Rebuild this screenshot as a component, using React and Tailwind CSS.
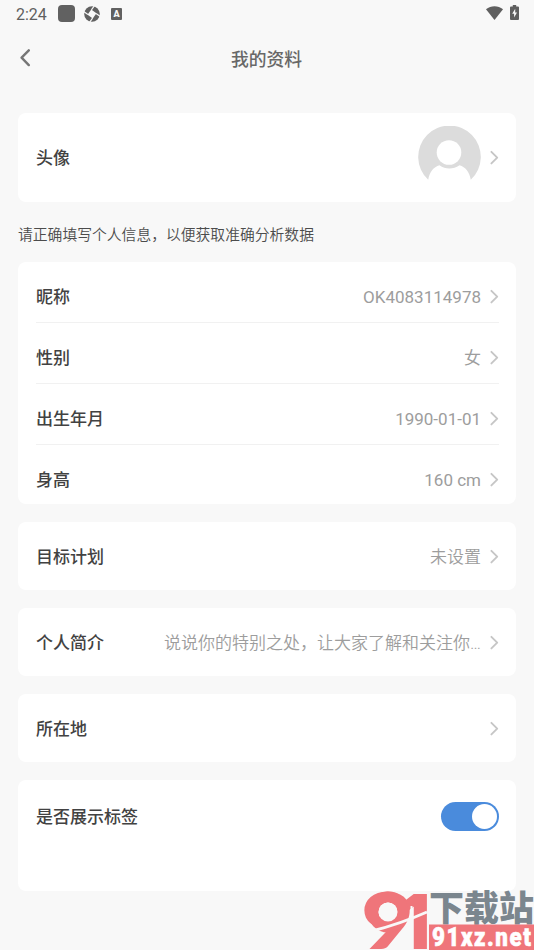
import React, { useState } from 'react';

const Chevron = () => (
    <svg className="ml-[9px] h-[15px] w-[9px] shrink-0" viewBox="0 0 9 15" fill="none" stroke="#c6c6c6" strokeWidth="1.9" strokeLinecap="round" strokeLinejoin="round">
        <path d="M1.4 1.8 7.2 7.6 1.4 13.4" />
    </svg>
);

const Row = ({ label, value }) => (
    <div className="flex flex-1 items-center">
        <span className="shrink-0 pt-[2px] font-medium text-[#424242]">{label}</span>
        <span className="flex-1 truncate pt-[2px] text-right text-[#9d9d9d]">{value}</span>
        <Chevron />
    </div>
);

const Card = ({ className, children }) => (
    <section className={`flex rounded-lg bg-white pl-[18px] pr-[17px] text-[17px] leading-6 ${className}`}>{children}</section>
);

const StatusBar = () => (
    <div className="flex h-7 items-center pl-4 pr-[15px] text-[#5f5f5f]">
        <span className="w-[42px] pt-px text-[16px] leading-5">2:24</span>
        <span className="mb-px h-[17px] w-[17px] rounded-[4px] bg-[#616161]" />
        <svg className="mb-px ml-[9px] h-4 w-4" viewBox="0 0 16 16">
            <circle cx="8" cy="8" r="7.8" fill="#616161" />
            <g transform="rotate(35 8 8)">
                <rect x="4.8" y="4.8" width="6.4" height="6.4" fill="#f8f8f8" />
                <path d="M5.2 5V-1M11 5.2H17M10.8 11V17M5 10.8H-1" stroke="#f8f8f8" strokeWidth="1.2" />
            </g>
        </svg>
        <span className="ml-[11px] flex h-3 w-[11px] items-center justify-center rounded-[1px] bg-[#616161] text-[9px] font-black leading-none text-[#f8f8f8]">A</span>
        <svg className="mb-[2px] ml-auto h-[14px] w-[17px]" viewBox="0 0 17 14" fill="#5f5f5f">
            <path d="M0 3.2C5-.9 12-.9 17 3.2L8.5 14Z" />
        </svg>
        <svg className="mb-[3px] ml-[7px] h-[15px] w-[9px]" viewBox="0 0 9 15">
            <path d="M2.8 0h3.4v1.5H8a1 1 0 0 1 1 1V14a1 1 0 0 1-1 1H1a1 1 0 0 1-1-1V2.5a1 1 0 0 1 1-1h1.8Z" fill="#5f5f5f" />
            <path d="M5.2 3.8 2.2 8.7h1.9V12.5l2.9-5H5.2Z" fill="#f8f8f8" />
        </svg>
    </div>
);

const Avatar = () => (
    <svg className="mb-px h-[63px] w-[63px]" viewBox="0 0 63 63">
        <path d="M10.2 53.8A31.3 31.3 0 1 1 52.8 53.8C51.5 46 47.5 41 41.5 39.2 35 43.5 27.5 43.5 21.5 39.2 15.5 41 11.5 46 10.2 53.8Z" fill="#dcdcdc" />
        <circle cx="31" cy="26.5" r="12.3" fill="#fff" />
    </svg>
);

// site mark in the bottom right corner
const Watermark = () => (
    <div className="absolute bottom-0 right-0 h-[60px] w-[170px]">
        <svg className="h-full w-full" viewBox="0 0 170 60">
            <g fill="#ef757a" fontWeight="900">
                <text x="-3" y="59" fontSize="78" fontFamily="Lato, sans-serif" textLength="53" lengthAdjust="spacingAndGlyphs">9</text>
                <text x="36" y="59" fontSize="75" fontFamily="Inter, sans-serif" textLength="30" lengthAdjust="spacingAndGlyphs">1</text>
            </g>
            <circle cx="24" cy="22" r="15" fill="none" stroke="#ef757a" strokeWidth="11" />
            <circle cx="24" cy="22" r="9.5" fill="#f8f8f8" />
            <path d="M8 41Q36 34 63 22" stroke="#f8f8f8" strokeWidth="3" fill="none" />
            <path d="M47.5 16V58" stroke="#f8f8f8" strokeWidth="2" />
            <text x="65" y="31" fontSize="35" fontWeight="900" fill="#7b868e" fontFamily="'Noto Sans CJK SC', sans-serif">下载站</text>
            <rect x="65" y="34.5" width="105" height="25.5" fill="#ef757a" />
            <g transform="translate(68 56) scale(.86 1)">
                <text fontSize="26" fontWeight="900" fill="#fff" stroke="#fff" strokeWidth="0.6" fontFamily="Roboto, sans-serif" textLength="115">91xz.net</text>
            </g>
        </svg>
    </div>
);

const profile = [
    { label: '昵称', value: 'OK4083114978' },
    { label: '性别', value: '女' },
    { label: '出生年月', value: '1990-01-01' },
    { label: '身高', value: '160 cm' },
];

const App = () => {
    const [showTags, setShowTags] = useState(true);

    return (
        <div className="relative h-[950px] w-[534px] overflow-hidden bg-[#f8f8f8] font-[Roboto,'Noto_Sans_CJK_SC',sans-serif]">
            <StatusBar />

            <header className="flex h-[60px] items-center px-5">
                <svg className="h-[18px] w-[11px]" viewBox="0 0 11 18" fill="none" stroke="#767676" strokeWidth="2.4" strokeLinecap="round" strokeLinejoin="round">
                    <path d="M8.8 1.3 1.6 8.7 8.8 16.1" />
                </svg>
                <h1 className="flex-1 pr-[12px] pt-[3px] text-center text-[17.8px] font-medium leading-6 text-[#686868]">我的资料</h1>
            </header>

            <main className="px-[18px] pt-[25px]">
                <Card className="h-[89px] items-center">
                    <span className="flex-1 pt-px font-medium text-[#424242]">头像</span>
                    <Avatar />
                    <Chevron />
                </Card>

                <p className="flex h-[60px] items-center pt-[7px] text-[14.8px] font-[350] text-[#4c4c4c]">请正确填写个人信息，以便获取准确分析数据</p>

                <Card className="h-[242px] flex-col">
                    {profile.map((item) => (
                        <div key={item.label} className="flex h-[61px] shrink-0 border-b border-[#f1f1f1] pt-[8px] last:h-[59px] last:border-0 last:pt-[9px]">
                            <Row label={item.label} value={item.value} />
                        </div>
                    ))}
                </Card>

                <Card className="mt-[18px] h-[68px] font-[350]">
                    <Row label="目标计划" value="未设置" />
                </Card>

                <Card className="mt-[18px] h-[68px] font-[350]">
                    <Row label="个人简介" value="说说你的特别之处，让大家了解和关注你…" />
                </Card>

                <Card className="mt-[18px] h-[68px]">
                    <Row label="所在地" />
                </Card>

                <Card className="mt-[18px] h-[111px] items-start justify-between pt-[22px]">
                    <span className="pt-[3px] font-medium text-[#424242]">是否展示标签</span>
                    <button
                        onClick={() => setShowTags(!showTags)}
                        className={`flex h-[29px] w-[58px] items-center rounded-full px-[2px] ${showTags ? 'justify-end bg-[#4a8bdc]' : 'justify-start bg-[#dcdcdc]'}`}
                    >
                        <span className="h-[25px] w-[25px] rounded-full bg-white" />
                    </button>
                </Card>
            </main>

            <Watermark />
        </div>
    );
};

export default App;
